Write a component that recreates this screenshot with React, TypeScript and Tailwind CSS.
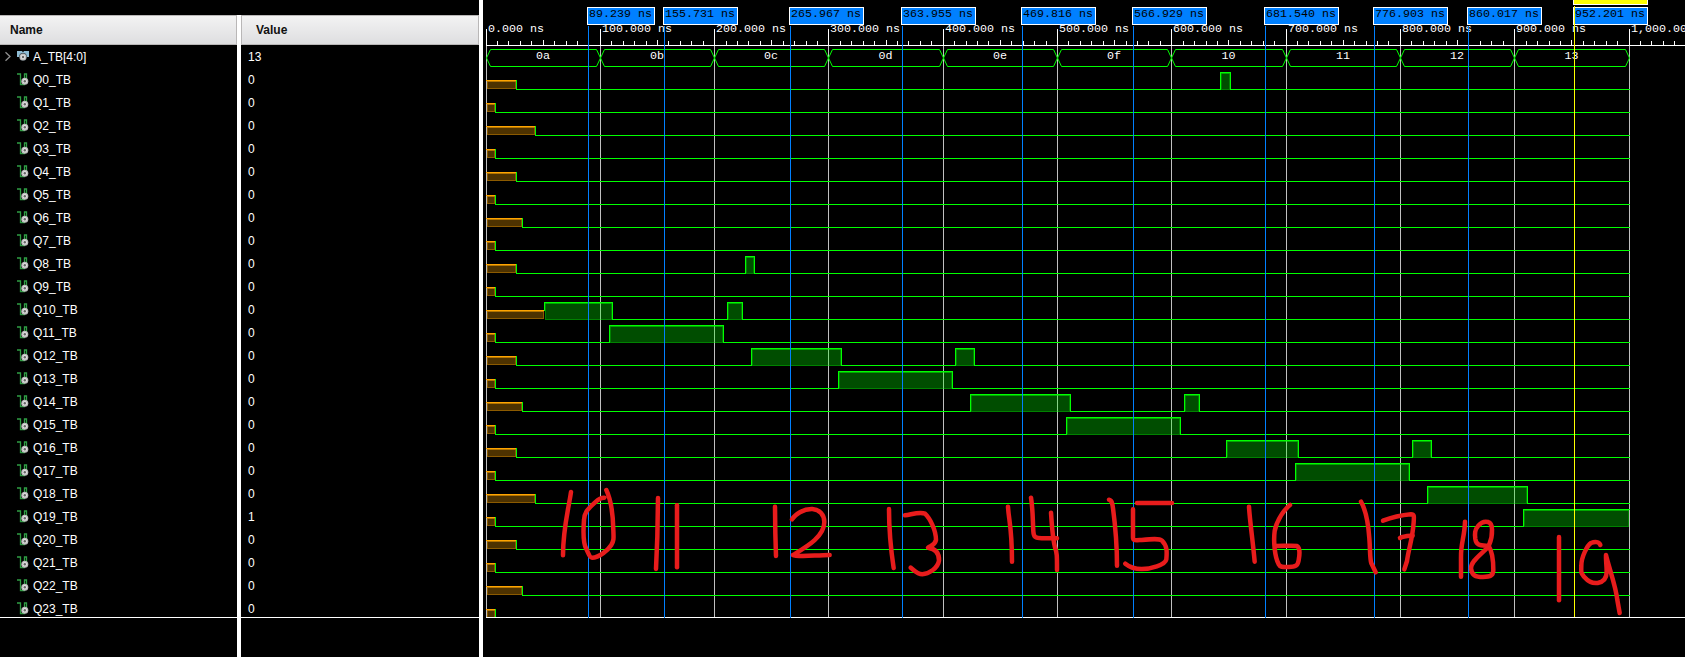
import React from "react";

const START = 486;
const END = 1629;
const NS = 1.143;

const GRID = Array.from({ length: 11 }, (_, i) => Math.floor(START + i * 100 * NS + 0.01));
const BUS = ["0a", "0b", "0c", "0d", "0e", "0f", "10", "11", "12", "13"];

const MARKERS: { x: number; label: string }[] = [
  { x: 588, label: "89.239 ns" },
  { x: 664, label: "155.731 ns" },
  { x: 790, label: "265.967 ns" },
  { x: 902, label: "363.955 ns" },
  { x: 1022, label: "469.816 ns" },
  { x: 1133, label: "566.929 ns" },
  { x: 1265, label: "681.540 ns" },
  { x: 1374, label: "776.903 ns" },
  { x: 1468, label: "860.017 ns" },
  { x: 1574, label: "952.201 ns" },
];

type Signal = { name: string; value: string; known: number; pulses: [number, number][] };

const PULSES: Record<number, [number, number][]> = {
  0: [[1220, 1230]],
  8: [[745, 754]],
  10: [[544, 612], [727, 742]],
  11: [[609, 723]],
  12: [[751, 841], [955, 974]],
  13: [[838, 952]],
  14: [[970, 1070], [1184, 1199]],
  15: [[1066, 1180]],
  16: [[1226, 1298], [1412, 1431]],
  17: [[1295, 1409]],
  18: [[1427, 1527]],
  19: [[1523, 1629]],
};

const KNOWN: Record<number, number> = {
  0: 516, 2: 535, 4: 516, 6: 522, 8: 516, 10: 544, 12: 516, 14: 522, 16: 516, 18: 535, 20: 516, 22: 522,
};

const SIGNALS: Signal[] = Array.from({ length: 24 }, (_, i) => ({
  name: `Q${i}_TB`,
  value: i === 19 ? "1" : "0",
  known: KNOWN[i] ?? 495,
  pulses: PULSES[i] ?? [],
}));

function Gear({ cx, cy }: { cx: number; cy: number }) {
  return (
    <>
      <circle cx={cx} cy={cy} r="3.5" fill="#bdbdbd" />
      <circle cx={cx} cy={cy} r="2.2" fill="#e2e2e2" />
      <circle cx={cx} cy={cy} r="1.2" fill="#666" />
    </>
  );
}

function SignalIcon() {
  return (
    <svg width="12" height="13" viewBox="0 0 12 13" className="block">
      <path d="M0 1H3.5V11.5H7.5V1H9.5V8" fill="none" stroke="#2f9e44" strokeWidth="1.3" />
      <Gear cx={7.8} cy={8.3} />
    </svg>
  );
}

function BusIcon() {
  return (
    <svg width="12" height="13" viewBox="0 0 12 13" className="block">
      <path d="M0 1H5L6 2.5L7 1H12V7H0Z" fill="#8fbcd4" />
      <circle cx="6" cy="7" r="3.9" fill="#1b262c" />
      <Gear cx={6} cy={7} />
    </svg>
  );
}

function HeaderCell({ children, pad }: { children: React.ReactNode; pad: string }) {
  return (
    <div
      className={`flex h-[30px] items-center border-t border-r border-b border-[#b9b7b7] bg-linear-to-b from-[#f3f3f3] to-[#dedee0] text-[12px] font-bold text-[#111] ${pad}`}
    >
      {children}
    </div>
  );
}

function NamePanel() {
  return (
    <div className="flex w-[237px] flex-col pt-[15px]">
      <HeaderCell pad="pl-[10px]">Name</HeaderCell>
      <div className="h-[573px] overflow-hidden border-b border-white">
        <div className="flex h-[23px] items-center">
          <svg width="17" height="13" viewBox="0 0 17 13" className="block">
            <path d="M5.5 2.2L10 6.5L5.5 10.8" fill="none" stroke="#8f8f8f" strokeWidth="1.3" />
          </svg>
          <BusIcon />
          <span className="pl-[4px]">A_TB[4:0]</span>
        </div>
        {SIGNALS.map((s) => (
          <div key={s.name} className="flex h-[23px] items-center pl-[17px]">
            <SignalIcon />
            <span className="pl-[4px]">{s.name}</span>
          </div>
        ))}
      </div>
    </div>
  );
}

function ValuePanel() {
  return (
    <div className="flex w-[238px] flex-col pt-[15px]">
      <HeaderCell pad="border-l pl-[14px]">Value</HeaderCell>
      <div className="h-[573px] overflow-hidden border-b border-white">
        <div className="flex h-[23px] items-center pl-[7px]">13</div>
        {SIGNALS.map((s) => (
          <div key={s.name} className="flex h-[23px] items-center pl-[7px]">{s.value}</div>
        ))}
      </div>
    </div>
  );
}

function Ruler() {
  const ticks = [];
  for (let i = 0; START + i * 10 * NS < 1685; i++) {
    if (i % 10 === 0) continue;
    const x = Math.floor(START + i * 10 * NS + 0.01);
    const top = i % 5 === 0 ? 40 : 41;
    ticks.push(<rect key={i} x={x} y={top} width="1" height={45 - top} fill="#fff" />);
  }
  return (
    <g>
      {ticks}
      <rect x={START} y="45" width="1199" height="1" fill="#fff" />
      {GRID.map((x, i) => (
        <g key={x}>
          <rect x={x} y="29" width="1" height="17" fill="#fff" />
          <rect x={x} y="46" width="1" height="571" fill="#c0c0c0" />
          <text x={x + 2} y="32" fill="#fff">{i === 10 ? "1,000.000 ns" : `${i}00.000 ns`.replace(/^000/, "0")}</text>
        </g>
      ))}
    </g>
  );
}

function BusWave() {
  return (
    <g fill="none" stroke="#00ff00">
      {BUS.map((v, i) => {
        const a = GRID[i] + 0.5;
        const b = GRID[i + 1] + 0.5;
        return (
          <g key={v}>
            <path d={`M${a} 58L${a + 4} 49.5H${b - 4}L${b} 58L${b - 4} 66.5H${a + 4}Z`} />
            <text x={(a + b) / 2 - 7.5} y="59" fill="#fff" stroke="none">{v}</text>
          </g>
        );
      })}
    </g>
  );
}

function Wave({ signal, low }: { signal: Signal; low: number }) {
  const { known, pulses } = signal;
  const high = low - 17;
  const lows: [number, number][] = [];
  let from = known;
  pulses.forEach(([a, b]) => {
    if (a > from) lows.push([from, a + 1]);
    from = b;
  });
  if (from < END) lows.push([from, END + 1]);
  const rises = pulses.length > 0 && pulses[0][0] === known;
  return (
    <g>
      <rect x={START} y={low - 9} width={known - START} height="1" fill="#ffa500" />
      <rect x={START + 1} y={low - 8} width={known - START - 1} height="8" fill="#ffa500" fillOpacity="0.3" />
      <rect x={START + 1.5} y={low - 7.5} width={known - START - 2} height="7" fill="none" stroke="#ffa500" strokeOpacity="0.35" />
      <rect x={START + 1} y={low - 8} width={known - START - 1} height="1" fill="#ffa500" fillOpacity="0.35" />
      {!rises && <rect x={known} y={low - 9} width="1" height="10" fill="#00ff00" />}
      {lows.map(([a, b]) => (
        <rect key={a} x={a} y={low} width={b - a} height="1" fill="#00ff00" />
      ))}
      {pulses.map(([a, b]) => (
        <g key={a} fill="#00ff00">
          <rect x={a + 1} y={high + 1} width={b - a - 1} height="17" fillOpacity="0.3" />
          <rect x={a + 1.5} y={high + 1.5} width={b - a - 2} height="16" fill="none" stroke="#00ff00" strokeOpacity="0.3" />
          <rect x={a + 1} y={high + 1} width={b - a - 1} height="1" fillOpacity="0.3" />
          <rect x={a} y={high} width={b - a + 1} height="1" />
          <rect x={a} y={high} width="1" height={a === known ? 9 : 18} />
          {b < END && <rect x={b} y={high} width="1" height="18" />}
        </g>
      ))}
    </g>
  );
}

function Markers() {
  return (
    <g>
      {MARKERS.map(({ x, label }, i) => {
        const last = i === MARKERS.length - 1;
        const width = label.length * 7 + 5;
        return (
          <g key={x}>
            {!last && <rect x={x} y="26" width="1" height="592" fill="#0080ff" />}
            <rect x={x - 0.5} y="7.5" width={width - 1} height="17" fill="#0080ff" stroke="#fff" />
            <text x={x + 1} y="17" fill="#000">{label}</text>
          </g>
        );
      })}
      <rect x="1573.5" y="-10.5" width="74" height="15" fill="#ffff00" stroke="#fff" />
      <rect x="1574" y="6" width="1" height="611" fill="#ffff00" />
    </g>
  );
}

function Annotations() {
  return (
    <g fill="none" stroke="#e81c1c" strokeWidth="13.5" strokeLinecap="round" strokeLinejoin="round">
      <g transform="translate(540 470) scale(0.33333)">
        <path d="M93 66C86 115 69 175 69 256" />
        <path d="M193 83C179 82 172 91 162 100C140 120 133 130 132 150C129 190 132 225 139 237C146 252 150 263 156 263C178 263 205 239 214 225C222 211 221 205 220 180C219 125 213 90 199 60" />
        <path d="M354 84L352 200L348 297" />
        <path d="M411 106V292" />
        <path d="M705 110L706 190L708 258" />
        <path d="M756 148C765 133 790 116 817 117C839 118 853 135 853 156C853 200 800 230 759 255C770 262 820 256 869 255" />
        <path d="M1047 117C1047 190 1052 235 1061 294" />
        <path d="M1095 136C1120 132 1140 125 1155 131C1170 145 1188 180 1188 210C1185 225 1175 226 1164 233C1187 236 1198 250 1197 272C1194 295 1165 312 1147 313C1132 313 1120 299 1112 293" />
      </g>
      <g transform="translate(960 470) scale(0.33333)">
        <path d="M144 110C146 150 156 170 156 275" />
        <path d="M213 83C219 120 218 150 220 184C221 202 227 205 245 205H291" />
        <path d="M273 128C276 170 277 200 285 232C291 250 291 255 291 300" />
        <path d="M447 89C455 90 457 98 459 115C467 175 471 210 471 287" />
        <path d="M519 118V202C519 212 521 211 545 210C575 207 598 205 606 212C622 228 621 245 619 268C616 285 570 297 545 297C527 297 507 290 496 281" />
        <path d="M531 99H636" />
        <path d="M867 110C869 150 879 215 884 275" />
        <path d="M990 105C974 117 950 150 944 183C940 215 944 260 956 283C960 292 970 291 986 291C1007 291 1013 287 1016 271C1020 250 1019 232 1011 228C1000 226 970 228 946 228" />
      </g>
      <g transform="translate(1320 430) scale(0.33333)">
        <path d="M123 215C137 240 145 280 148 325C151 360 149 385 154 400L167 427" />
        <path d="M189 272C210 264 250 255 273 253C284 253 282 260 281 277C278 325 266 355 261 393L253 418" />
        <path d="M240 324C250 318 263 318 278 317" />
        <path d="M435 275C434 320 422 340 423 382V440" />
        <path d="M506 348C482 346 469 348 466 327C464 310 464 300 475 287C485 275 496 274 504 276C514 279 516 286 516 299C517 325 512 334 506 348C490 370 453 390 453 415C455 436 466 441 489 441C511 440 520 437 520 420C520 390 515 362 506 348" />
        <path d="M717 321V511" />
        <path d="M841 345C838 335 825 334 813 339C802 346 784 380 784 407C783 431 784 430 793 441C805 455 818 461 833 459C852 455 860 444 860 425C860 405 857 390 858 375C866 410 888 470 892 510L899 549" />
      </g>
    </g>
  );
}

function WavePanel() {
  return (
    <svg
      width="1202"
      height="657"
      viewBox="483 0 1202 657"
      className="block shrink-0 font-['Liberation_Mono',monospace] text-[11.667px]"
    >
      <clipPath id="waves">
        <rect x="483" y="0" width="1202" height="617" />
      </clipPath>
      <Ruler />
      <g clipPath="url(#waves)">
        <BusWave />
        {SIGNALS.map((s, i) => (
          <Wave key={s.name} signal={s} low={89 + i * 23} />
        ))}
      </g>
      <rect x={START} y="617" width="1199" height="1" fill="#fff" />
      <Markers />
      <Annotations />
    </svg>
  );
}

export default function App() {
  return (
    <div className="flex h-[657px] w-[1685px] overflow-hidden bg-black font-['Liberation_Sans',Arial,sans-serif] text-[12px] leading-none text-white">
      <NamePanel />
      <div className="mt-[15px] w-[4px] bg-white" />
      <ValuePanel />
      <div className="w-[4px] bg-white" />
      <WavePanel />
    </div>
  );
}
